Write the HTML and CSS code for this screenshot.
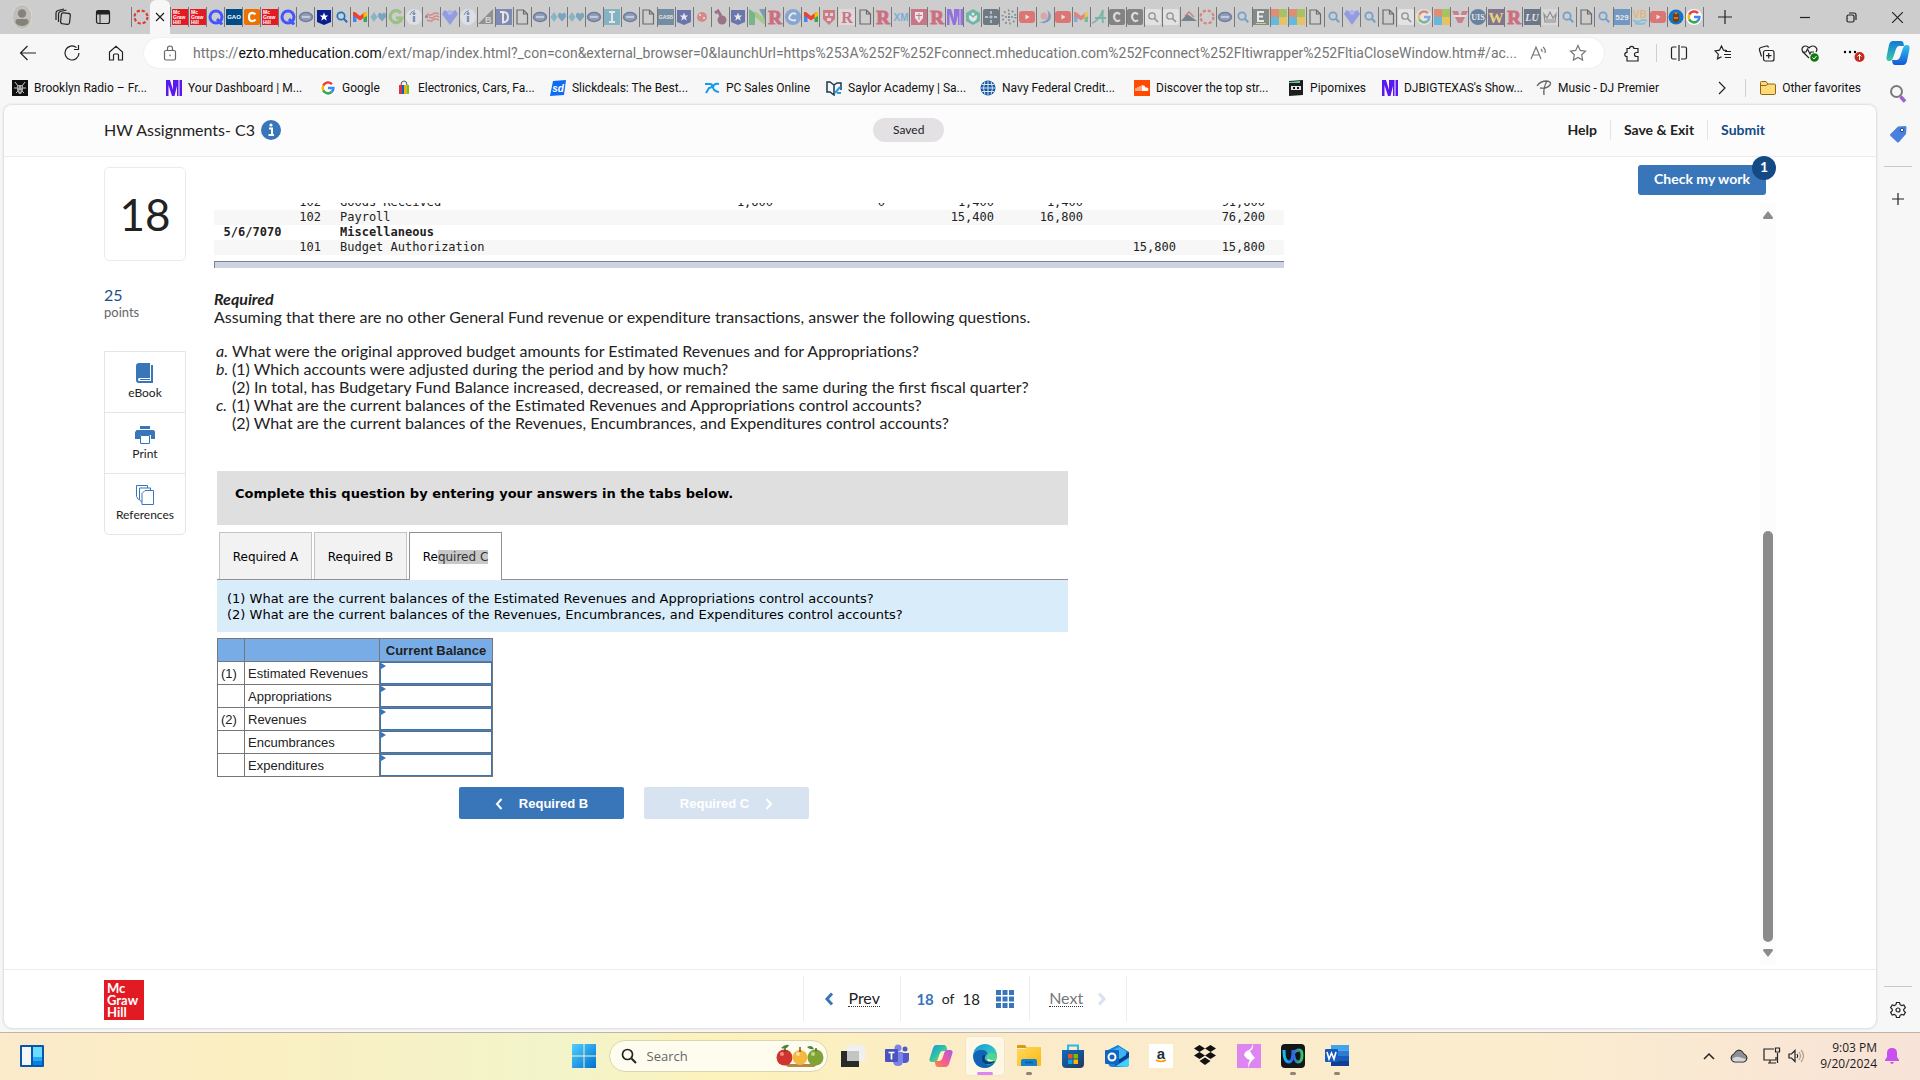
FILE: index.html
```html
<!DOCTYPE html>
<html lang="en">
<head>
<meta charset="utf-8">
<title>HW Assignments- C3</title>
<link rel="stylesheet" href="styles.css">
</head>
<body>
<svg class="gradients" aria-hidden="true">
  <defs>
    <linearGradient id="gEdge" x1="0" y1="0" x2="1" y2="1"><stop offset="0" stop-color="#1593d8"/><stop offset=".5" stop-color="#2cc0c8"/><stop offset="1" stop-color="#5fdc6c"/></linearGradient>
    <linearGradient id="gWin" x1="0" y1="0" x2="1" y2="1"><stop offset="0" stop-color="#4fd0ff"/><stop offset="1" stop-color="#0070d0"/></linearGradient>
    <linearGradient id="gCopA" x1="0" y1="0" x2="1" y2="1"><stop offset="0" stop-color="#1a8cf0"/><stop offset=".5" stop-color="#2fc7a0"/><stop offset="1" stop-color="#f5c131"/></linearGradient>
    <linearGradient id="gCopB" x1="1" y1="0" x2="0" y2="1"><stop offset="0" stop-color="#a45cf0"/><stop offset=".5" stop-color="#f05a9a"/><stop offset="1" stop-color="#fb8b3c"/></linearGradient>
    <linearGradient id="gCopC" x1="0" y1="0" x2="0" y2="1"><stop offset="0" stop-color="#1678d8"/><stop offset="1" stop-color="#38c9a8"/></linearGradient>
    <linearGradient id="gCopD" x1="0" y1="0" x2="0" y2="1"><stop offset="0" stop-color="#2ec4f0"/><stop offset="1" stop-color="#1557d8"/></linearGradient>
    <linearGradient id="gFold" x1="0" y1="0" x2="1" y2="1"><stop offset="0" stop-color="#ffd95e"/><stop offset="1" stop-color="#fbb80f"/></linearGradient>
    <linearGradient id="gStore" x1="0" y1="0" x2="1" y2="1"><stop offset="0" stop-color="#0f6cbd"/><stop offset="1" stop-color="#22385f"/></linearGradient>
    <linearGradient id="gWx" x1="0" y1="0" x2="1" y2="0"><stop offset="0" stop-color="#12c0f0"/><stop offset=".5" stop-color="#2b62f0"/><stop offset="1" stop-color="#30c860"/></linearGradient>
  </defs>
</svg>
<svg class="symbols" aria-hidden="true">
  <symbol id="ring" viewBox="0 0 16 16"><circle cx="8" cy="8" r="6.500" fill="none" stroke="#e03c31" stroke-width="2.200" stroke-dasharray="3.200 1.900"/></symbol>
  <symbol id="mg" viewBox="0 0 16 16"><rect width="16" height="16" fill="#e21a23"/><g class="ft" font-size="5" font-weight="700" fill="#fff"><text x="1" y="5">Mc</text><text x="1" y="10">Graw</text><text x="1" y="15">Hill</text></g></symbol>
  <symbol id="q" viewBox="0 0 16 16"><circle cx="8" cy="8" r="6" fill="none" stroke="#4255ff" stroke-width="3"/><path d="M9 10l5 5.500" stroke="#4255ff" stroke-width="3"/></symbol>
  <symbol id="gao" viewBox="0 0 16 16"><rect width="16" height="16" fill="#004b87"/><text class="fm" x="8" y="10" font-size="6" font-weight="700" fill="#fff">GAO</text></symbol>
  <symbol id="chegg" viewBox="0 0 16 16"><rect width="16" height="16" rx="2" fill="#eb7100"/><path d="M11.500 5.500Q10 3.800 8 3.800 5 4 5 8t3 4.200q2 0 3.500-1.700" fill="none" stroke="#fff" stroke-width="2.200"/></symbol>
  <symbol id="oval" viewBox="0 0 16 16"><ellipse cx="8" cy="8" rx="6.500" ry="4.500" fill="#8f9db5" stroke="#6f7e9d" stroke-width="1.500"/><path d="M4 8h8" stroke="#d5dbe5" stroke-width="1.500"/></symbol>
  <symbol id="shield" viewBox="0 0 16 16"><path d="M1 1h14v12l-7 3-7-3z" fill="#0a1f8f"/><path d="M8 3.500l1.200 3h3l-2.400 2 1 3.200L8 9.800l-2.800 1.900 1-3.200-2.400-2h3z" fill="#fff"/></symbol>
  <symbol id="mag" viewBox="0 0 16 16"><circle cx="7" cy="7" r="3.700" fill="none" stroke="#1a73c8" stroke-width="1.700"/><path d="M9.800 9.800l3.400 3.400" stroke="#1a73c8" stroke-width="2"/></symbol>
  <symbol id="gmail" viewBox="0 0 16 16"><path d="M1 3v10h3.500V6z" fill="#4285f4"/><path d="M15 3v10h-3.500V6z" fill="#34a853"/><path d="M1 3h2l5 4 5-4h2v3.500L8 11.500 1 6.500z" fill="#ea4335"/><path d="M11.500 4.200L13 3h2v4l-3.500 2z" fill="#fbbc04"/></symbol>
  <symbol id="hearts" viewBox="0 0 16 16"><path d="M4 3l3.500 5L4 13 .5 8z" fill="#3f9fc0"/><path d="M12 12.500L8 8V5l2-1.500 2 1.500 2-1.500L16 5v3z" fill="#2c7fb0"/></symbol>
  <symbol id="gg" viewBox="0 0 16 16"><path d="M13 4A6 6 0 1 0 14 9H8" fill="none" stroke="#6ab43e" stroke-width="3.200"/></symbol>
  <symbol id="ind" viewBox="0 0 16 16"><circle cx="8" cy="8" r="8" fill="#eef2f8"/><path d="M8 7v6" stroke="#2557a7" stroke-width="2.400"/><circle cx="8" cy="4.500" r="1.500" fill="#2557a7"/><path d="M4 6q1-4 5-4.500" fill="none" stroke="#2557a7"/></symbol>
  <symbol id="flag" viewBox="0 0 16 16"><path d="M3 5q4 2 6 0t6 0M5 8q3 2 5 0t5 0M3 11q4 2 6 0t6 0" fill="none" stroke="#d94a4a" stroke-width="1.700"/><circle cx="2.500" cy="7.500" r="1.500" fill="#7a2f5f"/></symbol>
  <symbol id="vheart" viewBox="0 0 16 16"><path d="M8 16L0 5l2.500-4L8 4l5.500-3L16 5z" fill="#5b6df5"/><circle cx="8" cy="3.500" r="2.500" fill="#8fa0ff"/></symbol>
  <symbol id="tri" viewBox="0 0 16 16"><path d="M0 15L15 0v15z" fill="#555"/><text class="ft" x="7" y="14" font-size="9" font-weight="700" fill="#ddd">B</text></symbol>
  <symbol id="dsq" viewBox="0 0 16 16"><rect width="16" height="16" fill="#2f4a9c"/><path d="M4 3h3q5 0 5 5t-5 5.500V3" fill="none" stroke="#fff" stroke-width="2"/></symbol>
  <symbol id="doc" viewBox="0 0 16 16"><path d="M3 1h6.500L13.500 5v10H3zM9.500 1v4h4" fill="none" stroke="#6b6b6b" stroke-width="1.200"/></symbol>
  <symbol id="isq" viewBox="0 0 16 16"><rect width="16" height="16" fill="#3d9dbd"/><path d="M5 3h6M8 3v10M5 13h6" stroke="#fff" stroke-width="2"/></symbol>
  <symbol id="gasb" viewBox="0 0 16 16"><rect width="16" height="16" fill="#1f4e79"/><text class="fm" x="8" y="10" font-size="5" font-weight="700" fill="#fff">GASB</text></symbol>
  <symbol id="rdot" viewBox="0 0 16 16"><circle cx="8" cy="8" r="5" fill="#e04848"/><circle cx="6" cy="6" r="1" fill="#fff"/><circle cx="10" cy="9" r="1" fill="#fff"/></symbol>
  <symbol id="bomb" viewBox="0 0 16 16"><circle cx="10" cy="11" r="4.500" fill="#6b1d3d"/><path d="M9 7L6 2 3 4" fill="none" stroke="#6b1d3d" stroke-width="3"/></symbol>
  <symbol id="ngr" viewBox="0 0 16 16"><path d="M0 0l6 4v12H0z" fill="#2a9d4a"/><path d="M6 2l10 8v6L6 8z" fill="#7ac943"/><path d="M10 0h6v11z" fill="#2c6e8f"/></symbol>
  <symbol id="rr" viewBox="0 0 16 16"><text class="fs" x="8" y="15" font-size="19" fill="#cc1236" stroke="#cc1236">R</text></symbol>
  <symbol id="rl" viewBox="0 0 16 16"><rect width="16" height="16" fill="#f3e4e4"/><text class="fs" x="8" y="14" font-size="16" fill="#c31f3a">R</text></symbol>
  <symbol id="cb" viewBox="0 0 16 16"><circle cx="8" cy="8" r="8" fill="#3f7fd8"/><path d="M11 5.500Q8 3 5.500 6t0 4.500T11 11" fill="none" stroke="#fff" stroke-width="2"/></symbol>
  <symbol id="rsh" viewBox="0 0 16 16"><path d="M2 1h12v9l-6 6-6-6z" fill="#c9303e"/><path d="M4 4h3v3H4zM9 4h3v3H9zM6 9h4v3H6z" fill="#f3d8d8"/></symbol>
  <symbol id="xm" viewBox="0 0 16 16"><text class="fm" x="8" y="12" font-size="10" font-weight="700" fill="#2a8fd8">XM</text></symbol>
  <symbol id="rsq" viewBox="0 0 16 16"><rect width="16" height="16" fill="#c41f44"/><path d="M4 3h8v6l-4 5-4-5z" fill="#fff"/><path d="M8 4v7M5 6.500h6" stroke="#c41f44"/></symbol>
  <symbol id="mm" viewBox="0 0 16 16"><path d="M0 0h4l3 10V0h5.500v16H11V6l-2.500 10H6L2.500 5v11H0zM13.500 0H16v16h-2.500z" fill="#5a18f0"/></symbol>
  <symbol id="leaf" viewBox="0 0 16 16"><path d="M8 0l7 4v8l-7 4-7-4V4z" fill="#13a37f"/><path d="M8 13Q3 11 4 6q3 1 4 3 1-2 4-3 1 5-4 7z" fill="#fff"/><circle cx="8" cy="5" r="1.500" fill="#fff"/></symbol>
  <symbol id="dots" viewBox="0 0 16 16"><circle cx="8" cy="8" r="6.500" fill="none" stroke="#33475b" stroke-width="2" stroke-dasharray="1.500 2.600"/><path d="M8 4v8M4 8h8" stroke="#33475b" stroke-width="1.500" stroke-dasharray="2 1"/></symbol>
  <symbol id="dsqr" viewBox="0 0 16 16"><rect width="16" height="16" rx="2" fill="#14283c"/><path d="M8 2v12M2 8h12" stroke="#9db5c8" stroke-width="1.800" stroke-dasharray="3 1.500"/></symbol>
  <symbol id="yt" viewBox="0 0 16 16"><rect y="2" width="16" height="12" rx="3" fill="#f01f1f"/><path d="M6.500 5.500v5l4-2.500z" fill="#fff"/></symbol>
  <symbol id="swirl" viewBox="0 0 16 16"><circle cx="7" cy="7" r="3.500" fill="#e38080"/><path d="M10 1q6 4 3 10-4 5-11 2 8 0 9-5 1-4-1-7z" fill="#3a6cb8"/></symbol>
  <symbol id="ascr" viewBox="0 0 16 16"><path d="M1 14Q8 12 12 1q-1 7 0 13M4 9h11" fill="none" stroke="#2c9c86" stroke-width="1.800"/></symbol>
  <symbol id="csq" viewBox="0 0 16 16"><rect width="16" height="16" rx="2" fill="#3c3c3c"/><path d="M11 5.500Q8 2.500 6 5t0 5.500T11 11" fill="none" stroke="#e8e8e8" stroke-width="2.200"/></symbol>
  <symbol id="msq" viewBox="0 0 16 16"><rect width="16" height="16" rx="2" fill="#f8f8f8"/><circle cx="7" cy="7" r="3.200" fill="none" stroke="#555" stroke-width="1.300"/><path d="M9.500 9.500L13 13" stroke="#555" stroke-width="1.600"/></symbol>
  <symbol id="mtn" viewBox="0 0 16 16"><path d="M0 12l6-7 3 2 7 5z" fill="#24404b"/><path d="M4 7l4-4 5 5" fill="none" stroke="#c04040" stroke-width="1.500"/></symbol>
  <symbol id="esq" viewBox="0 0 16 16"><rect width="16" height="16" fill="#3d4a45"/><path d="M11 3H5v9h6M5 7.500h5" fill="none" stroke="#fff" stroke-width="2"/><path d="M3 14.500h10" stroke="#d7d04a"/></symbol>
  <symbol id="ms" viewBox="0 0 16 16"><path fill="#f25022" d="M0 0h8v8H0z"/><path fill="#7fba00" d="M8 0h8v8H8z"/><path fill="#00a4ef" d="M0 8h8v8H0z"/><path fill="#ffb900" d="M8 8h8v8H8z"/></symbol>
  <symbol id="goo" viewBox="0 0 16 16"><circle cx="8" cy="8" r="8" fill="#fff"/><g fill="none" stroke-width="2.600"><path d="M12 4.200A5.400 5.400 0 0 0 3.200 5.600" stroke="#ea4335"/><path d="M3.200 5.600a5.400 5.400 0 0 0 0 4.800" stroke="#fbbc05"/><path d="M3.200 10.400A5.400 5.400 0 0 0 11.600 12" stroke="#34a853"/><path d="M11.600 12a5.400 5.400 0 0 0 1.800-4H8" stroke="#4285f4"/></g></symbol>
  <symbol id="vred" viewBox="0 0 16 16"><path d="M0 2h6l2 7 2-7h6l-6 12H6z" fill="#c4354f"/><path d="M2 7h12" stroke="#eee" stroke-width="2"/></symbol>
  <symbol id="uis" viewBox="0 0 16 16"><circle cx="8" cy="8" r="8" fill="#003a70"/><text class="fs" x="8" y="11" font-size="8" fill="#fff">UIS</text></symbol>
  <symbol id="wsq" viewBox="0 0 16 16"><rect width="16" height="16" fill="#3a1f52"/><text class="fs" x="8" y="14" font-size="15" fill="#ffe22a">W</text></symbol>
  <symbol id="lj" viewBox="0 0 16 16"><rect width="16" height="16" fill="#0d2144"/><text class="fs" x="8" y="12" font-size="10" font-style="italic" fill="#fff">LU</text></symbol>
  <symbol id="crown" viewBox="0 0 16 16"><rect width="16" height="16" fill="#e3e3e3"/><path d="M2 5l3 4 3-6 3 6 3-4-1 8H3z" fill="none" stroke="#555" stroke-width="1.200"/><path d="M4 11h8" stroke="#555"/></symbol>
  <symbol id="f529" viewBox="0 0 16 16"><rect width="16" height="16" fill="#1664b8"/><text class="fm" x="8" y="11" font-size="8" font-weight="700" fill="#fff">529</text></symbol>
  <symbol id="vb" viewBox="0 0 16 16"><text class="fm" x="8" y="9" font-size="10" font-weight="700" fill="#f0a030">VB</text><path d="M1 11q4 3 7 1t7 0M3 14q5 2 10 0" fill="none" stroke="#4fb0d8" stroke-width="2"/></symbol>
  <symbol id="owl" viewBox="0 0 16 16"><circle cx="8" cy="8" r="7.500" fill="#0e74c8"/><path d="M5 5q3-3 6 0v7q-3 3-6 0z" fill="#7a3d17"/><path d="M6 3.500l2 2 2-2" fill="#f08c1a"/><path d="M6 9h4" stroke="#f08c1a" stroke-width="1.500"/></symbol>
</svg>

<header class="tabstrip">
  <div class="tabtools">
    <svg width="20" height="26" viewBox="0 0 20 26"><ellipse cx="10" cy="13" rx="10" ry="12.500" fill="#c2bfba" stroke="#dcdad6"/><circle cx="10" cy="9.500" r="4.200" fill="#85817b"/><path d="M3.500 19v-1.500q0-2.500 2.500-2.500h8q2.500 0 2.500 2.500V19q-2.500 3-6.500 3t-6.500-3z" fill="#85817b"/></svg>
    <svg class="ln" width="18" height="18" viewBox="0 0 18 18"><rect x="7" y="5" width="9" height="11" rx="2" transform="rotate(6 11 10)"/><path d="M4.500 14V6q0-2 2-2.500l6-1.500M2 12V5q0-2 2-2.500L10 1"/></svg>
    <svg class="ln" width="18" height="18" viewBox="0 0 18 18"><rect x="2.500" y="2.500" width="13" height="13" rx="2"/><path d="M2.500 4.500h13" stroke-width="4"/><path d="M6 6v9" stroke-width="1"/></svg>
  </div>
  <nav class="tabs first"><a href="#"><svg><use href="#ring"/></svg></a></nav>
  <div class="activetab"><button aria-label="Close tab"><svg class="ln" width="10" height="10" viewBox="0 0 10 10"><path d="M1 1l8 8M9 1L1 9"/></svg></button></div>
  <nav class="tabs">
    <a href="#"><svg><use href="#mg"/></svg></a><a href="#"><svg><use href="#mg"/></svg></a><a href="#"><svg><use href="#q"/></svg></a><a href="#"><svg><use href="#gao"/></svg></a><a href="#"><svg><use href="#chegg"/></svg></a><a href="#"><svg><use href="#mg"/></svg></a><a href="#"><svg><use href="#q"/></svg></a>
    <a href="#"><svg><use href="#oval"/></svg></a><a href="#"><svg><use href="#shield"/></svg></a><a href="#"><svg><use href="#mag"/></svg></a><a href="#"><svg><use href="#gmail"/></svg></a>
    <a href="#" class="dim"><svg><use href="#hearts"/></svg></a><a href="#" class="dim"><svg><use href="#gg"/></svg></a><a href="#" class="dim"><svg><use href="#ind"/></svg></a><a href="#" class="dim"><svg><use href="#flag"/></svg></a><a href="#" class="dim"><svg><use href="#vheart"/></svg></a><a href="#" class="dim"><svg><use href="#ind"/></svg></a><a href="#" class="dim"><svg><use href="#tri"/></svg></a><a href="#" class="dim"><svg><use href="#dsq"/></svg></a>
    <a href="#"><svg><use href="#doc"/></svg></a><a href="#"><svg><use href="#oval"/></svg></a><a href="#" class="dim"><svg><use href="#hearts"/></svg></a><a href="#" class="dim"><svg><use href="#hearts"/></svg></a><a href="#"><svg><use href="#oval"/></svg></a><a href="#" class="dim"><svg><use href="#isq"/></svg></a><a href="#"><svg><use href="#oval"/></svg></a>
    <a href="#"><svg><use href="#doc"/></svg></a><a href="#" class="dim"><svg><use href="#gasb"/></svg></a><a href="#" class="dim"><svg><use href="#shield"/></svg></a><a href="#" class="dim"><svg><use href="#rdot"/></svg></a><a href="#" class="dim"><svg><use href="#bomb"/></svg></a><a href="#" class="dim"><svg><use href="#shield"/></svg></a><a href="#" class="dim"><svg><use href="#ngr"/></svg></a><a href="#" class="dim"><svg><use href="#rr"/></svg></a><a href="#" class="dim"><svg><use href="#cb"/></svg></a><a href="#"><svg><use href="#gmail"/></svg></a>
    <a href="#" class="dim"><svg><use href="#rsh"/></svg></a><a href="#" class="dim"><svg><use href="#rl"/></svg></a><a href="#"><svg><use href="#doc"/></svg></a><a href="#" class="dim"><svg><use href="#rr"/></svg></a><a href="#" class="dim"><svg><use href="#xm"/></svg></a><a href="#" class="dim"><svg><use href="#rsq"/></svg></a><a href="#" class="dim"><svg><use href="#rr"/></svg></a><a href="#" class="dim"><svg><use href="#mm"/></svg></a><a href="#" class="dim"><svg><use href="#leaf"/></svg></a><a href="#" class="dim"><svg><use href="#dsqr"/></svg></a><a href="#" class="dim"><svg><use href="#dots"/></svg></a>
    <a href="#" class="dim"><svg><use href="#yt"/></svg></a><a href="#" class="dim"><svg><use href="#swirl"/></svg></a><a href="#" class="dim"><svg><use href="#yt"/></svg></a><a href="#" class="dim"><svg><use href="#gmail"/></svg></a><a href="#" class="dim"><svg><use href="#ascr"/></svg></a><a href="#" class="dim"><svg><use href="#csq"/></svg></a><a href="#" class="dim"><svg><use href="#csq"/></svg></a><a href="#" class="dim"><svg><use href="#msq"/></svg></a><a href="#" class="dim"><svg><use href="#msq"/></svg></a><a href="#" class="dim"><svg><use href="#mtn"/></svg></a><a href="#" class="dim"><svg><use href="#ring"/></svg></a><a href="#"><svg><use href="#oval"/></svg></a><a href="#" class="dim"><svg><use href="#mag"/></svg></a><a href="#" class="dim"><svg><use href="#esq"/></svg></a>
    <a href="#" class="dim"><svg><use href="#ms"/></svg></a><a href="#" class="dim"><svg><use href="#ms"/></svg></a><a href="#"><svg><use href="#doc"/></svg></a><a href="#" class="dim"><svg><use href="#mag"/></svg></a><a href="#" class="dim"><svg><use href="#vheart"/></svg></a><a href="#" class="dim"><svg><use href="#mag"/></svg></a><a href="#"><svg><use href="#doc"/></svg></a><a href="#" class="dim"><svg><use href="#msq"/></svg></a><a href="#" class="dim"><svg><use href="#goo"/></svg></a><a href="#" class="dim"><svg><use href="#ms"/></svg></a><a href="#" class="dim"><svg><use href="#vred"/></svg></a><a href="#" class="dim"><svg><use href="#uis"/></svg></a><a href="#" class="dim"><svg><use href="#wsq"/></svg></a><a href="#" class="dim"><svg><use href="#rr"/></svg></a><a href="#" class="dim"><svg><use href="#lj"/></svg></a><a href="#" class="dim"><svg><use href="#crown"/></svg></a><a href="#" class="dim"><svg><use href="#mag"/></svg></a><a href="#"><svg><use href="#doc"/></svg></a><a href="#" class="dim"><svg><use href="#mag"/></svg></a><a href="#" class="dim"><svg><use href="#f529"/></svg></a><a href="#" class="dim"><svg><use href="#vb"/></svg></a><a href="#" class="dim"><svg><use href="#yt"/></svg></a><a href="#"><svg><use href="#owl"/></svg></a><a href="#" class="last"><svg><use href="#goo"/></svg></a>
  </nav>
  <div class="wincontrols">
    <button class="newtab" aria-label="New tab"><svg class="ln" width="14" height="14" viewBox="0 0 14 14"><path d="M7 0v14M0 7h14"/></svg></button>
    <button aria-label="Minimize"><svg class="ln" width="10" height="10" viewBox="0 0 10 10"><path d="M0 5.500h10"/></svg></button>
    <button aria-label="Restore"><svg class="ln" width="11" height="11" viewBox="0 0 11 11"><rect x="1" y="3" width="7" height="7" rx="1.500"/><path d="M3 1h5q2 0 2 2v5"/></svg></button>
    <button aria-label="Close"><svg class="ln" width="11" height="11" viewBox="0 0 11 11"><path d="M0 0l11 11M11 0L0 11"/></svg></button>
  </div>
</header>

<div class="window">
  <div class="mainpane">
    <div class="toolbar">
      <button aria-label="Back"><svg class="ln" width="18" height="16" viewBox="0 0 18 16"><path d="M17 8H2M8.500 1L1.500 8l7 7"/></svg></button>
      <button aria-label="Refresh"><svg class="ln" width="18" height="18" viewBox="0 0 18 18"><path d="M16 9a7 7 0 1 1-2.500-5.400M15.500 1v4.500H11"/></svg></button>
      <button aria-label="Home"><svg class="ln" width="16" height="16" viewBox="0 0 16 16"><path d="M1.500 7L8 1.200 14.500 7v8h-4v-5q0-1-1-1h-3q-1 0-1 1v5h-4z"/></svg></button>
      <div class="address">
        <svg class="lock" width="14" height="16" viewBox="0 0 14 16"><rect x="1.500" y="5.500" width="11" height="9.500" rx="1.500"/><path d="M4.500 5.500v-2a2.500 2.500 0 0 1 5 0v2M7 9.500v1.800"/></svg>
        <div class="url" role="textbox" aria-label="Address">https://<b>ezto.mheducation.com</b>/ext/map/index.html?_con=con&amp;external_browser=0&amp;launchUrl=https%253A%252F%252Fconnect.mheducation.com%252Fconnect%252Fltiwrapper%252FltiaCloseWindow.htm#/ac...</div>
        <button aria-label="Read aloud"><svg class="gr" width="17" height="16" viewBox="0 0 17 16"><path d="M1 14L6 2l5 12M3 10h6M11 4q1.500 1.500 1 3M13 2q3 2.500 2 6"/></svg></button>
        <button class="star" aria-label="Favorite"><svg class="gr" width="18" height="18" viewBox="0 0 18 18"><path d="M9 1.500l2.300 4.900 5.200.7-3.800 3.700.9 5.300L9 13.500l-4.600 2.600.9-5.300L1.500 7.100l5.200-.7z"/></svg></button>
      </div>
      <div class="actions">
        <button aria-label="Extensions"><svg class="ln" width="16" height="17" viewBox="0 0 16 17"><path d="M5.500 3.500a2.200 2.200 0 0 1 4.400 0H14v4h-1.500a2 2 0 0 0 0 4H14V16H3v-4.300a2.200 2.200 0 0 1 0-4.400V3.500z"/></svg></button>
        <span class="vr"></span>
        <button aria-label="Split screen"><svg class="ln" width="18" height="16" viewBox="0 0 18 16"><path d="M6.500 2H3q-1.500 0-1.500 1.500v9Q1.500 14 3 14h3.500M11 2h4q1.500 0 1.500 1.500v9Q16.500 14 15 14h-4M9 0v16"/></svg></button>
        <button aria-label="Favorites"><svg class="ln" width="18" height="17" viewBox="0 0 18 17"><path d="M13 5.500l-3.500-.3L7.500 1 5.500 5.200l-4.500.7 3.300 3.200-.8 4.800 4-2.200M11 6.500h6M10 9.500h7M11 12.500h6"/></svg></button>
        <button aria-label="Collections"><svg class="ln" width="17" height="17" viewBox="0 0 17 17"><rect x="5.500" y="5.500" width="10.500" height="10.500" rx="2"/><path d="M10.700 8v5.500M8 10.700h5.500M3.500 11.500L1.500 5Q1 3 3 2.500L8.500 1q1.500-.3 2 1.500"/></svg></button>
        <button aria-label="Browser essentials"><svg width="18" height="18" viewBox="0 0 18 18"><path class="ln" d="M8 14L2 8Q0 5 2 3t5 0l1 1 1-1q3-2 5.500 0t.5 5M1 8h4l1.500-3L9 10l1-2h3"/><circle cx="13.500" cy="13.500" r="4.300" fill="#107c10"/><path d="M11.500 13.500l1.500 1.500 2.500-3" fill="none" stroke="#fff"/></svg></button>
        <button aria-label="Settings and more"><svg width="22" height="18" viewBox="0 0 22 18"><circle cx="2" cy="8" r="1.200"/><circle cx="7" cy="8" r="1.200"/><circle cx="12" cy="8" r="1.200"/><circle cx="16.500" cy="13" r="5" fill="#c42b1c"/><path d="M16.500 16v-5.500M14.500 12.500l2-2 2 2" fill="none" stroke="#fff"/></svg></button>
      </div>
    </div>
    <nav class="bookmarks">
      <a class="wide" href="#"><svg class="fav" viewBox="0 0 16 16"><rect width="16" height="16" fill="#111"/><path d="M3 2l3 4M13 2l-3 4M2 8h3M11 8h3M4 13l2-2M12 13l-2-2" stroke="#ccc"/><path d="M5 5h6v5l-2 4H7l-2-4z" fill="#aaa"/><path d="M6 7h1M9 7h1M7 11h2" stroke="#111"/></svg>Brooklyn Radio – Fr...</a>
      <a class="wide" href="#"><svg class="fav"><use href="#mm"/></svg>Your Dashboard | M...</a>
      <a href="#"><svg class="fav"><use href="#goo"/></svg>Google</a>
      <a class="wide" href="#"><svg class="fav" viewBox="0 0 16 16"><path d="M5 5q0-4 3-4t3 4" fill="none" stroke="#555"/><path d="M3 5h3v9H3z" fill="#e53238"/><path d="M6 5h2v9H6z" fill="#0064d2"/><path d="M8 5h2.500v9H8z" fill="#f5af02"/><path d="M10.500 5H13v9h-2.500z" fill="#86b817"/></svg>Electronics, Cars, Fa...</a>
      <a class="wide" href="#"><svg class="fav" viewBox="0 0 16 16"><path d="M3 1l13-1-2 15-14 1z" fill="#0c6cf2"/><text class="fm" x="8" y="12" font-size="10" font-weight="700" font-style="italic" fill="#fff">sd</text></svg>Slickdeals: The Best...</a>
      <a href="#"><svg class="fav" viewBox="0 0 16 16"><path d="M1 4h5q2.500 0 2 2t-3 2L2 13M15 4q-5-1-6 3 0 4 6 5" fill="none" stroke="#179bf0" stroke-width="2"/></svg>PC Sales Online</a>
      <a class="wide" href="#"><svg class="fav" viewBox="0 0 16 16"><path d="M1 2h3l4 3v10l-4-3H1zM8 5l3-2h4v7" fill="none" stroke="#163a52" stroke-width="1.500"/><path d="M9 13l5-6M11 13h4" stroke="#2d9bd8" stroke-width="2"/></svg>Saylor Academy | Sa...</a>
      <a class="wide" href="#"><svg class="fav" viewBox="0 0 16 16"><circle cx="8" cy="8" r="7.500" fill="#15569f"/><path d="M1 8h14M2 4.500h12M2 11.500h12M8 1v14M5 1.500q-3 6.500 0 13M11 1.500q3 6.500 0 13" fill="none" stroke="#d7e5f5"/></svg>Navy Federal Credit...</a>
      <a class="wide" href="#"><svg class="fav" viewBox="0 0 16 16"><rect width="16" height="16" fill="#ff4a00"/><path d="M2 8v3M4 7v4M6 6v5" stroke="#fff"/><path d="M7.500 5.500q3-1 4 2 3-.5 3 1.800T12.500 11h-5z" fill="#fff"/></svg>Discover the top str...</a>
      <a href="#"><svg class="fav" viewBox="0 0 16 16"><path d="M1 1l14-1v15L1 16z" fill="#1d1f1f"/><path d="M1 2l11-1v2H1z" fill="#68c79a"/><path d="M3 6h10v4H3z" fill="#e4e4e4"/><path d="M5 8h2M9 8h2" stroke="#111" stroke-width="2"/></svg>Pipomixes</a>
      <a class="wide" href="#"><svg class="fav"><use href="#mm"/></svg>DJBIGTEXAS's Show...</a>
      <a href="#"><svg class="fav" viewBox="0 0 16 16"><path d="M1 6q3-5 10-5 5 1 3 4-3 4-10 3M11 1Q7 8 8 15" fill="none" stroke="#666" stroke-width="1.300"/></svg>Music - DJ Premier</a>
      <span class="grow"></span>
      <button aria-label="More favorites"><svg class="ln" width="8" height="14" viewBox="0 0 8 14"><path d="M1 1l6 6-6 6"/></svg></button>
      <span class="vr"></span>
      <a class="otherfav" href="#"><svg class="fav" viewBox="0 0 16 16"><path d="M.5 13V2.500q0-1 1-1H6L8 4h6.500q1 0 1 1v8q0 1.500-1 1.500h-13q-1 0-1-1.500z" fill="#ffd97a" stroke="#8a6a14"/><path d="M.5 5.500H6L8 4" fill="none" stroke="#8a6a14"/></svg>Other favorites</a>
    </nav>

    <main class="page">
      <div class="pagehead">
        <h1>HW Assignments- C3 <svg width="20" height="20" viewBox="0 0 20 20"><circle cx="10" cy="10" r="10" fill="#3875b9"/><path d="M8 8.500h3V15M7.500 15h5.500" fill="none" stroke="#fff" stroke-width="2"/><circle cx="10" cy="5" r="1.600" fill="#fff"/></svg></h1>
        <span class="saved">Saved</span>
        <nav class="headlinks"><a href="#">Help</a><a href="#">Save &amp; Exit</a><a class="submit" href="#">Submit</a></nav>
      </div>

      <div class="work">
        <aside class="side">
          <div class="qnum">18</div>
          <div class="points"><strong>25</strong>points</div>
          <div class="tools">
            <button><svg width="18" height="20" viewBox="0 0 18 20"><path d="M3 0h11v15H3.500a1.500 1.500 0 0 0 0 3H15V2h2v18H3a3 3 0 0 1-3-3V3a3 3 0 0 1 3-3z" fill="#3875b9"/><path d="M4 16.500h10" stroke="#3875b9"/></svg>eBook</button>
            <button><svg width="20" height="18" viewBox="0 0 20 18"><path d="M5 0h10v3H5zM1 5q0-1 1-1h16q2 0 2 2v7h-4V9H5v4H0V6z" fill="#3875b9"/><path d="M5.500 9.500h9v8h-9z" fill="#fff" stroke="#3875b9"/></svg>Print</button>
            <button><svg width="18" height="20" viewBox="0 0 18 20" fill="#fff" stroke="#3875b9"><path d="M.5.500h11v14H2.500l-2-3z"/><path d="M3.500 3h11v14h-9l-2-2.500z"/><path d="M9 5.500h8.500v14H6V8.500z"/></svg>References</button>
          </div>
        </aside>

        <section class="content">
          <div class="checkrow"><button class="check">Check my work<span class="badge">1</span></button></div>
          <div class="scrollrow">
            <div class="scroll">
              <table class="journal">
                <colgroup><col class="c1"><col class="c2"><col class="c3"><col class="c4"><col class="c5"><col class="c6"><col class="c7"><col class="c8"><col class="c9"></colgroup>
                <tbody>
                <tr><td></td><td>102</td><td>Goods Received</td><td>1,600</td><td>0</td><td>1,400</td><td>1,400</td><td></td><td>91,600</td></tr>
                <tr class="alt"><td></td><td>102</td><td>Payroll</td><td></td><td></td><td>15,400</td><td>16,800</td><td></td><td>76,200</td></tr>
                <tr class="strong"><td>5/6/7070</td><td></td><td>Miscellaneous</td><td></td><td></td><td></td><td></td><td></td><td></td></tr>
                <tr class="alt"><td></td><td>101</td><td>Budget Authorization</td><td></td><td></td><td></td><td></td><td>15,800</td><td>15,800</td></tr>
                </tbody>
              </table>
              <div class="tablefoot"></div>

              <div class="prompt">
                <h2>Required</h2>
                <p>Assuming that there are no other General Fund revenue or expenditure transactions, answer the following questions.</p>
                <dl>
                  <dt>a.</dt><dd>What were the original approved budget amounts for Estimated Revenues and for Appropriations?</dd>
                  <dt>b.</dt><dd>(1) Which accounts were adjusted during the period and by how much?</dd>
                  <dd>(2) In total, has Budgetary Fund Balance increased, decreased, or remained the same during the first fiscal quarter?</dd>
                  <dt>c.</dt><dd>(1) What are the current balances of the Estimated Revenues and Appropriations control accounts?</dd>
                  <dd>(2) What are the current balances of the Revenues, Encumbrances, and Expenditures control accounts?</dd>
                </dl>
              </div>

              <div class="answer">
                <div class="instr">Complete this question by entering your answers in the tabs below.</div>
                <div class="anstabs" role="tablist">
                  <button role="tab">Required A</button><button role="tab">Required B</button><button role="tab" class="on" aria-selected="true">Re<mark>quired C</mark></button>
                </div>
                <div class="ask">(1) What are the current balances of the Estimated Revenues and Appropriations control accounts?<br>(2) What are the current balances of the Revenues, Encumbrances, and Expenditures control accounts?</div>
                <table class="grid">
                  <thead><tr><th></th><th></th><th>Current Balance</th></tr></thead>
                  <tbody>
                  <tr><td>(1)</td><td><label for="r1">Estimated Revenues</label></td><td class="cell"><input id="r1" type="text"></td></tr>
                  <tr><td></td><td><label for="r2">Appropriations</label></td><td class="cell"><input id="r2" type="text"></td></tr>
                  <tr><td>(2)</td><td><label for="r3">Revenues</label></td><td class="cell"><input id="r3" type="text"></td></tr>
                  <tr><td></td><td><label for="r4">Encumbrances</label></td><td class="cell"><input id="r4" type="text"></td></tr>
                  <tr><td></td><td><label for="r5">Expenditures</label></td><td class="cell"><input id="r5" type="text"></td></tr>
                  </tbody>
                </table>
                <div class="stepnav">
                  <button><svg width="8" height="12" viewBox="0 0 8 12"><path d="M6.500 1L2 6l4.500 5"/></svg>Required B</button>
                  <button disabled>Required C<svg width="8" height="12" viewBox="0 0 8 12"><path d="M1.500 1L6 6l-4.500 5"/></svg></button>
                </div>
              </div>
            </div>
            <div class="vbar" aria-hidden="true"><svg width="10" height="8" viewBox="0 0 10 8"><path d="M5 0l5 6.500Q10 8 9 8H1Q0 8 0 6.500z"/></svg><span class="space"></span><span class="thumb"></span><svg width="10" height="8" viewBox="0 0 10 8"><path d="M5 8l5-6.500Q10 0 9 0H1Q0 0 0 1.500z"/></svg></div>
          </div>
        </section>
      </div>

      <footer class="pagefoot">
        <div class="mglogo">Mc<br>Graw<br>Hill</div>
        <nav class="pager">
          <a href="#"><svg width="10" height="14" viewBox="0 0 10 14"><path d="M8 1.500L3 7l5 5.500" fill="none" stroke="#3875b9" stroke-width="3"/></svg><span>Prev</span></a>
          <div class="count"><b>18</b><i>of</i>18<svg width="18" height="18" viewBox="0 0 18 18"><path fill="#3875b9" d="M0 0h5v5H0zM6.500 0h5v5h-5zM13 0h5v5h-5zM0 6.500h5v5H0zM6.500 6.500h5v5h-5zM13 6.500h5v5h-5zM0 13h5v5H0zM6.500 13h5v5h-5zM13 13h5v5h-5z"/></svg></div>
          <a class="off" href="#"><span>Next</span><svg width="10" height="14" viewBox="0 0 10 14"><path d="M2 1.500L7 7l-5 5.500" fill="none" stroke="#d7e3f1" stroke-width="3"/></svg></a>
        </nav>
      </footer>
    </main>
  </div>

  <aside class="edgebar">
    <svg width="24" height="28" viewBox="0 0 24 28"><path d="M7 2h8q2 0 2.500 2l.5 3h-5q-2 0-3 3l-3 9q-1 3-3 3H3q-3 0-2.500-4L3 6q1-4 4-4z" fill="url(#gCopC)"/><path d="M17 26H9q-2 0-2.500-2L6 21h5q2 0 3-3l3-9q1-3 3-3h1q3 0 2.500 4L21 22q-1 4-4 4z" fill="url(#gCopD)"/></svg>
    <svg class="s2" width="18" height="20" viewBox="0 0 18 20"><circle cx="7.500" cy="7.500" r="5.500" fill="none" stroke="#7a7a7a" stroke-width="2"/><path d="M11.500 12.500l4.500 5" stroke="#9b5fd0" stroke-width="3.500"/></svg>
    <svg class="s3" width="18" height="18" viewBox="0 0 18 18"><path d="M9 1.500L16 1q1.500 0 1.500 1.500L17 9l-7 8q-1 1-2 0L1.500 11q-1-1 0-2z" fill="#4a7fdc"/><circle cx="13" cy="5" r="1.700" fill="#fff" stroke="#244a9a"/></svg>
    <hr>
    <svg class="ln s4" width="12" height="12" viewBox="0 0 12 12"><path d="M6 0v12M0 6h12"/></svg>
    <span class="grow"></span>
    <hr>
    <svg class="ln s5" width="18" height="18" viewBox="0 0 18 18"><path d="M7.500 1.500h3l.6 2.200 1.500.9 2.200-.7 1.600 2.700-1.700 1.600v1.600l1.700 1.600-1.600 2.700-2.200-.7-1.500.9-.6 2.200h-3l-.6-2.200-1.500-.9-2.200.7-1.600-2.700 1.700-1.600V8.200L1.600 6.600l1.600-2.700 2.200.7 1.500-.9z"/><circle cx="9" cy="9" r="2"/></svg>
  </aside>
</div>

<footer class="taskbar">
  <div class="tleft"><svg width="24" height="22" viewBox="0 0 24 22"><rect width="24" height="22" rx="1" fill="#0a56a8"/><path d="M2 2h9v18H2z" fill="#f7f7fa"/><path d="M13 2h9v10h-9z" fill="#6fdcff"/><path d="M13 12h9v4h-9z" fill="#27a9f5"/><path d="M13 16h9v4h-9z" fill="#0480ea"/></svg></div>
  <div class="tmid">
    <svg width="24" height="24" viewBox="0 0 24 24"><path fill="url(#gWin)" d="M0 0h11.500v11.500H0zM12.500 0H24v11.500H12.500zM0 12.500h11.500V24H0zM12.500 12.500H24V24H12.500z"/></svg>
    <label class="tsearch"><svg width="16" height="16" viewBox="0 0 16 16"><circle cx="6.500" cy="6.500" r="5" fill="none" stroke="#222" stroke-width="1.700"/><path d="M10.500 10.500l4.500 4.500" stroke="#222" stroke-width="2"/></svg><input type="text" placeholder="Search" aria-label="Search"><svg width="48" height="24" viewBox="0 0 48 24"><path d="M8 20h34l-4 3H12z" fill="#b5854a"/><circle cx="8.500" cy="13.500" r="8" fill="#cf3430"/><circle cx="24" cy="13.500" r="7.500" fill="#f4b840"/><circle cx="39.500" cy="13.500" r="8" fill="#7fa336"/><circle cx="6" cy="10" r="2" fill="#ee8d80"/><circle cx="22" cy="10" r="2" fill="#fde09a"/><circle cx="37" cy="10" r="2" fill="#bfd87c"/><path d="M9 8V4M24 8V3M40 7V4" stroke="#6b3d1c" stroke-width="1.300"/><path d="M5 4q4-4 8-3-2 5-8 3zM31 3q5-3 7 2-4 1-7-2z" fill="#3f8a3c"/></svg></label>
    <svg width="24" height="24" viewBox="0 0 24 24"><path d="M6 1h18v16H6z" fill="#f0f0f0"/><path d="M0 7h18v16H0z" fill="#2a2a2a"/><path d="M6 7h12v10H6z" fill="#c4c4c4"/></svg>
    <svg width="24" height="24" viewBox="0 0 24 24"><circle cx="13" cy="4" r="3.500" fill="#7b83eb"/><circle cx="20" cy="5" r="2.500" fill="#5059c9"/><path d="M8 8h10v9q0 5-5 5t-5-5z" fill="#7b83eb"/><path d="M18 9h6v6q0 4-4 4h-2z" fill="#5059c9"/><rect y="5" width="13" height="13" rx="1" fill="#4b53bc"/><path d="M3.500 8.500h6M6.500 8.500v7" stroke="#fff" stroke-width="1.700"/></svg>
    <svg width="24" height="24" viewBox="0 0 24 24"><path d="M7 1h8q2 0 2.500 2l1 4h-5q-2 0-3 3l-2 6q-1 2-3 2H3q-3 0-2.500-3L4 4q1-3 3-3z" fill="url(#gCopA)"/><path d="M17 23H9q-2 0-2.500-2l-1-4h5q2 0 3-3l2-6q1-2 3-2H21q3 0 2.500 3L20 20q-1 3-3 3z" fill="url(#gCopB)"/></svg>
    <span class="tactive run"><svg width="24" height="24" viewBox="0 0 24 24"><circle cx="12" cy="12" r="12" fill="url(#gEdge)"/><path d="M0 12Q2 5 9 6q5 0 6 5-4-2-6 1-2 5 3 8 5 2 10-2-4 6-11 6Q1 23 0 12z" fill="#1263b8"/><path d="M9 12q-2 5 3 8 5 1 10-2l-1-1q-4 2-7 0-4-2-1-6-2-2-4 1z" fill="#0b3f84"/><path d="M14 12q2 2 0 4 3 3 9-1 1-6-9-3z" fill="#fdf3dc"/><path d="M14 12q0-3 4-3t6 3q0 4-4 4-5 0-5-2z" fill="#52d490"/></svg></span>
    <span class="run"><svg width="24" height="24" viewBox="0 0 24 24"><path d="M0 2q0-1 1-1h7l2 3H0z" fill="#d99a12"/><path d="M0 5h8l2-2h14v18q0 1-1 1H1q-1 0-1-1z" fill="url(#gFold)"/><path d="M4 22v-5q0-2 2-2h12q2 0 2 2v5z" fill="#1580d0"/><path d="M8 18.500h8" stroke="#0a5aa5" stroke-width="1.500"/></svg></span>
    <svg width="24" height="24" viewBox="0 0 24 24"><path d="M7 7V1.500h10V7" fill="none" stroke="#22b8f0" stroke-width="2"/><path d="M1 6h22v14q0 4-4 4H5q-4 0-4-4z" fill="url(#gStore)"/><path fill="#f25022" d="M7 10h4.500v4.500H7z"/><path fill="#7fba00" d="M12.500 10H17v4.500h-4.500z"/><path fill="#00a4ef" d="M7 15.500h4.500V20H7z"/><path fill="#ffb900" d="M12.500 15.500H17V20h-4.500z"/></svg>
    <svg width="24" height="24" viewBox="0 0 24 24"><path d="M3 6l10-5 11 7v12q0 3-3 3H8q-5 0-5-5z" fill="#1583dc"/><path d="M13 14l11-6v5L10 22z" fill="#0a3f8c"/><path d="M11 22l13-8v6q0 3-3 3z" fill="#43d0fa"/><path d="M6 7l8-4 7 4v4l-6 4H6z" fill="#3fb4f4"/><rect y="6" width="14" height="14" rx="1" fill="#1264c0"/><circle cx="7" cy="13" r="3.500" fill="none" stroke="#fff" stroke-width="2"/></svg>
    <svg width="24" height="24" viewBox="0 0 24 24"><rect width="24" height="24" fill="#fff"/><text class="fm" x="12" y="15" font-size="15" font-weight="700" fill="#222f3e">a</text><path d="M7 16q5 3 10 0" fill="none" stroke="#f90" stroke-width="1.500"/></svg>
    <svg width="24" height="24" viewBox="0 0 24 24"><path d="M6.500 1L12 4.500 6.500 8 1 4.500zM17.500 1L23 4.500 17.500 8 12 4.500zM6.500 8l5.500 3.500L6.500 15 1 11.500zM17.500 8l5.500 3.500-5.500 3.500-5.500-3.500zM12 13.500l5.500 3.500-5.500 4-5.500-4z" fill="#111"/></svg>
    <svg width="24" height="24" viewBox="0 0 24 24"><rect width="24" height="24" fill="#dd86f2"/><path d="M16 0q1 5-3 7 2 4 5 7-4 2-7 10 0-6 2-8-4-1-6-5 1-4 5-5 3-2 4-6z" fill="#fff"/></svg>
    <span class="run"><svg width="24" height="24" viewBox="0 0 24 24"><rect width="24" height="24" rx="4" fill="#131518"/><path d="M3 6q0 12 5 12 4 0 4-12M12 6q1 12 5 12t4-7q0-5-3-5t-5 3" fill="none" stroke="url(#gWx)" stroke-width="3"/></svg></span>
    <span class="run"><svg width="24" height="24" viewBox="0 0 24 24"><path d="M6 1h18v5.500H6z" fill="#41a5ee"/><path d="M6 6.500h18V12H6z" fill="#2b7cd3"/><path d="M6 12h18v5H6z" fill="#185abd"/><path d="M6 17h18v5H6z" fill="#103f91"/><rect y="5" width="13" height="13" rx="1" fill="#185abd"/><path d="M2 8l2 7 2.500-6L9 15l2-7" fill="none" stroke="#fff" stroke-width="1.600"/></svg></span>
  </div>
  <div class="tray">
    <svg class="ln" width="12" height="8" viewBox="0 0 12 8"><path d="M1 7l5-5 5 5" stroke-width="1.500"/></svg>
    <svg width="18" height="14" viewBox="0 0 18 14"><path d="M5 13H4q-3-1-3-4t3-4q2-4 5-4t5 4q3 1 3 4t-3 4z" fill="#8d9196" stroke="#222"/><path d="M2 10q4-3 7-2t7 2q-1 2.500-3 2.500H5Q2.500 12 2 10z" fill="#d4d8dc"/></svg>
    <svg class="ln" width="18" height="18" viewBox="0 0 18 18"><path d="M11 2H1v11h12v-3M5 16h8M7 13v3M14.500 6v10M12.500 1h4v4h-4z"/></svg>
    <svg class="ln" width="17" height="14" viewBox="0 0 17 14"><path d="M1 5h2.500L7 1.500v11L3.500 9H1zM9 5q1.500 2 0 4"/><path d="M11 3q3 4 0 8M13 1q5 6 0 12" opacity=".35"/></svg>
    <div class="clock">9:03 PM<br>9/20/2024</div>
    <svg width="14" height="16" viewBox="0 0 14 16"><path d="M7 0q5 0 5 5v4l2 3v1H0v-1l2-3V5q0-5 5-5zM5 14h4q-1 2-2 2t-2-2z" fill="#c850f0"/></svg>
  </div>
</footer>
</body>
</html>
```
FILE: styles.css
```css
* { box-sizing: border-box; }
body {
  margin: 0;
  min-height: 100vh;
  display: flex;
  flex-direction: column;
  background: #f7f7f7;
  color: #1b1b1b;
  font: 12px/16px "Open Sans", "Noto Sans", sans-serif;
}
button { font: inherit; color: inherit; background: none; border: 0; padding: 0; }
a { color: inherit; text-decoration: none; }
svg { display: block; flex: none; }
.gradients { position: absolute; width: 0; height: 0; }
.symbols { display: none; }
.ln { fill: none; stroke: #222; stroke-width: 1.2; }
.gr { fill: none; stroke: #777; stroke-width: 1.2; }
.ft, .fm { font-family: "Liberation Sans", sans-serif; }
.fs { font-family: "Liberation Serif", serif; font-weight: 700; text-anchor: middle; }
.fm { text-anchor: middle; }
.grow { flex: 1; }
.vr { width: 1px; height: 18px; background: #cfcfcf; }

/* Tab strip */
.tabstrip { display: flex; align-items: stretch; height: 34px; background: #cdcdcd; }
.tabtools { width: 131px; display: flex; align-items: center; gap: 22px; padding-left: 12px; }
.tabs { flex: 1; display: flex; align-items: center; }
.tabs.first { flex: 0 0 19px; }
.tabs a { flex: 1; display: flex; height: 20px; align-items: center; justify-content: center; border-left: 1px solid #777; }
.tabs a.last { border-right: 1px solid #777; }
.tabs svg { width: 16px; height: 16px; }
.dim svg { opacity: .5; }
.activetab { width: 20px; display: flex; align-items: center; justify-content: center; background: #f7f7f7; border-radius: 6px 6px 0 0; }
.wincontrols { width: 216px; display: flex; align-items: center; }
.wincontrols button { width: 46px; display: flex; justify-content: center; }
.wincontrols .newtab { width: 42px; margin-right: 36px; }

/* Browser window */
.window { flex: 1; display: flex; }
.mainpane { flex: 1; min-width: 0; display: flex; flex-direction: column; }
.toolbar { height: 38px; display: flex; align-items: center; }
.toolbar > button { width: 44px; display: flex; justify-content: center; }
.toolbar > button:first-child { margin-left: 6px; }
.address { flex: 1; min-width: 0; height: 30px; margin-left: 6px; padding: 0 17px 0 19px; display: flex; align-items: center; background: #fff; border-radius: 15px; box-shadow: 0 0 2px #e2e2e2; }
.lock { fill: none; stroke: #666; stroke-width: 1.2; }
.url { flex: 1; min-width: 0; overflow: hidden; white-space: nowrap; margin-left: 16px; font: 14px/20px Roboto, sans-serif; color: #757575; }
.url b { font-weight: 400; color: #111; }
.address button { margin-left: 6px; }
.address .star { margin-left: 22px; }
.actions { display: flex; align-items: center; width: 272px; padding: 0 0 0 20px; }
.actions button { width: 45px; display: flex; justify-content: center; }
.actions button:first-child { width: 16px; margin-right: 16px; }
.bookmarks { height: 33px; display: flex; align-items: center; padding: 0 15px 1px 12px; white-space: nowrap; color: #111; font-family: Roboto, sans-serif; }
.bookmarks a { display: flex; align-items: center; gap: 6px; padding-right: 16px; }
.bookmarks a.wide { width: 154px; }
.bookmarks a.otherfav { padding: 0; margin-left: 14px; }
.bookmarks .vr { margin-left: 19px; }
.fav { width: 16px; height: 16px; }

.edgebar { width: 44px; display: flex; flex-direction: column; align-items: center; padding: 5px 0 13px; }
.edgebar hr { width: 28px; margin: 0; border: 0; border-top: 1px solid #c8c8c8; }
.s2 { margin-top: 17px; }
.s3 { margin: 21px 0 23px; }
.s4 { margin-top: 26px; }
.s5 { margin-top: 14px; }

/* Assignment page */
.page { flex: 1; display: flex; flex-direction: column; margin: 0 0 4px 4px; background: #fff; border-radius: 8px; box-shadow: 0 0 3px #bdbdbd; overflow: hidden; font-family: Lato, "Open Sans", sans-serif; color: #222; }
.pagehead { height: 52px; display: grid; grid-template-columns: 46.3% auto 1fr; align-items: center; padding: 0 111px 2px 100px; background: #fcfcfc; border-bottom: 1px solid #ebebeb; }
h1 { margin: 0; display: flex; align-items: center; gap: 6px; font-size: 16px; line-height: 20px; font-weight: 400; }
.saved { padding: 4px 20px; background: #e3e1e4; border-radius: 12px; line-height: 16px; }
.headlinks { display: flex; justify-content: flex-end; font-size: 14px; line-height: 20px; font-weight: 700; }
.headlinks a { padding: 0 13px; }
.headlinks a + a { border-left: 1px solid #e5e5e5; }
.headlinks a.submit { padding-right: 0; color: #134a86; }

.work { flex: 1; display: flex; padding: 0 100px; }
.side { width: 82px; margin-right: 28px; padding-top: 10px; }
.qnum { height: 94px; display: flex; align-items: center; justify-content: center; border: 1px solid #ebebeb; border-radius: 5px; font-size: 44px; line-height: 48px; }
.points { margin-top: 25px; font-size: 13px; line-height: 16px; color: #666; }
.points strong { display: block; font-size: 16px; line-height: 18px; font-weight: 400; color: #1b4f8f; }
.tools { margin-top: 31px; border: 1px solid #e5e5e5; border-radius: 0 0 5px 5px; }
.tools button { width: 100%; height: 61px; display: flex; flex-direction: column; align-items: center; justify-content: flex-end; gap: 2px; padding-bottom: 11px; }
.tools button:first-child { height: 60px; }
.tools button + button { border-top: 1px solid #e5e5e5; }

.content { flex: 1; min-width: 0; display: flex; flex-direction: column; }
.checkrow { height: 46px; display: flex; justify-content: flex-end; align-items: flex-start; padding: 8px 10px 0 0; }
.check { position: relative; width: 128px; height: 30px; padding-bottom: 2px; border-radius: 3px; background: #3875b9; color: #fff; font-size: 14px; font-weight: 700; }
.badge { position: absolute; top: -9px; right: -10px; width: 24px; height: 24px; border-radius: 12px; background: #134a86; line-height: 22px; }
.scrollrow { flex: 1; display: flex; }
.scroll { flex: 1; min-width: 0; overflow: hidden; }
.vbar { width: 16px; margin-bottom: 4px; padding: 8px 0; display: flex; flex-direction: column; align-items: center; background: #fcfcfc; fill: #8b8b8b; }
.vbar .space { flex: 312; }
.vbar .thumb { flex: 410; width: 10px; margin-bottom: 7px; border-radius: 5px; background: #8b8b8b; }

.journal { width: 1070px; margin-top: -8px; table-layout: fixed; border-collapse: collapse; font: 12px/15px "DejaVu Sans Mono", monospace; text-align: right; }
.journal td { padding: 0; white-space: nowrap; }
.journal .alt { background: #f7f7f7; }
.journal .strong { font-weight: 700; }
.journal td:nth-child(1) { text-align: center; padding-left: 9px; }
.journal td:nth-child(3) { text-align: left; padding-left: 19px; }
.journal td:last-child { padding-right: 19px; }
.c1 { width: 68px; } .c2 { width: 39px; } .c3 { width: 340px; } .c4 { width: 112px; } .c5 { width: 112px; } .c6 { width: 109px; } .c7 { width: 89px; } .c8 { width: 93px; }
.tablefoot { width: 1070px; height: 7px; margin-top: 6px; background: #cdd3e0; border-top: 1px solid #7b8391; border-left: 1px solid #7b8391; }

.prompt { margin-top: 22px; font-size: 16px; line-height: 18px; }
.prompt h2, .prompt p { margin: 0; font-size: 16px; }
.prompt h2 { font-style: italic; font-weight: 700; }
.prompt dl { margin: 16px 0 0; display: grid; grid-template-columns: 16px 1fr; padding-left: 2px; }
.prompt dt { font-style: italic; }
.prompt dd { margin: 0; grid-column: 2; }

.answer { width: 851px; margin: 39px 0 0 3px; color: #000; font-family: "DejaVu Sans", sans-serif; font-size: 13px; }
.instr { height: 54px; padding: 15px 18px; background: #dfdfdf; font-weight: 700; }
.anstabs { display: flex; gap: 2px; margin-top: 7px; padding-left: 2px; border-bottom: 1px solid #919191; }
.anstabs button { width: 93px; height: 47px; padding-top: 2px; background: #f2f2f2; border: 1px solid #c4c4c4; border-bottom: 0; font-size: 12px; }
.anstabs .on { height: 48px; margin-bottom: -1px; padding-top: 0; background: #fff; border-color: #919191; }
mark { background: #c8c8c8; color: #333; }
.ask { padding: 11px 10px 9px; background: #d9ecfa; line-height: 16px; }
.grid { margin-top: 6px; border-collapse: collapse; font: 13px/20px "Liberation Sans", sans-serif; color: #222; white-space: nowrap; }
.grid td, .grid th { height: 23px; padding: 2px 3px 0; border: 1px solid #767676; }
.grid th { background: #78ace6; min-width: 27px; }
.grid th:nth-child(2) { width: 135px; }
.grid th:nth-child(3) { width: 113px; }
.grid .cell { position: relative; padding: 0; }
.cell input { display: block; width: 100%; height: 22px; border: 1px solid #3875b9; padding: 0 6px; background: #fff; }
.cell::before { content: ""; position: absolute; left: 1px; top: 1px; border: solid transparent; border-width: 3px 0 3px 5px; border-left-color: #3875b9; }
.stepnav { display: flex; gap: 20px; margin: 10px 0 0 242px; }
.stepnav button { width: 165px; height: 32px; display: flex; align-items: center; justify-content: center; gap: 16px; padding-top: 1px; border-radius: 2px; background: #3875b9; color: #fff; font: 700 13px/20px "Liberation Sans", sans-serif; }
.stepnav button:disabled { background: #d7e3f1; }
.stepnav svg { fill: none; stroke: currentColor; stroke-width: 2; }

.pagefoot { height: 59px; display: flex; padding: 6px 0 0 100px; border-top: 1px solid #ededed; }
.mglogo { width: 40px; height: 40px; margin: 4px 0 0; padding: 2px 3px; background: #e21a23; color: #fff; font: 700 13px/12px Lato, sans-serif; }
.pager { height: 45px; margin-left: 37.2%; display: flex; font-size: 16px; border: solid #ededed; border-width: 0 1px; }
.pager > * { display: flex; align-items: center; justify-content: center; width: 96px; gap: 14px; }
.pager span { border-bottom: 1px dotted #333; line-height: 16px; }
.pager .off { color: #767676; }
.pager .count { width: 130px; gap: 8px; border: solid #ededed; border-width: 0 1px; font-size: 15px; }
.pager b { color: #3875b9; }
.pager i { font-size: 14px; font-style: normal; }
.pager .count svg { margin-left: 8px; }

/* Task bar */
.taskbar { height: 48px; display: grid; grid-template-columns: 1fr auto 1fr; align-items: center; padding-bottom: 2px; border-top: 1px solid #bdb6a3; background: linear-gradient(90deg, #fbeacb, #fbefc2 12%, #f3f4ca 29%, #fdf2bb 38%, #fbebc9 52%, #fbecce 80%, #f8e3d8); }
.tleft { padding-left: 20px; }
.tmid { display: flex; align-items: center; gap: 20px; }
.tmid > .tsearch { margin: 0 -7px; }
.tsearch { width: 219px; height: 32px; display: flex; align-items: center; gap: 10px; padding: 0 3px 0 11px; border: 1px solid #dcd6ae; border-radius: 16px; background: #fefcee; }
.tsearch input { flex: 1; min-width: 0; border: 0; padding: 0; background: none; font: 13px/20px "Open Sans", sans-serif; }
.tsearch input::placeholder { color: #666; opacity: 1; }
.run { position: relative; }
.run::after { content: ""; position: absolute; left: 9px; bottom: -7px; width: 6px; height: 3px; border-radius: 2px; background: #8d8474; }
.tactive { margin: 0 -8px; padding: 7px; background: #fef7e6; border: 1px solid #f3e6c8; border-radius: 4px; }
.tactive::after { left: 11px; bottom: 0; width: 16px; background: #dd86f2; }
.tray { display: flex; align-items: center; justify-content: flex-end; gap: 15px; padding-right: 21px; }
.tray svg:nth-child(4) { margin-left: -8px; }
.clock { text-align: right; }
.clock + svg { margin-left: -7px; }
```
